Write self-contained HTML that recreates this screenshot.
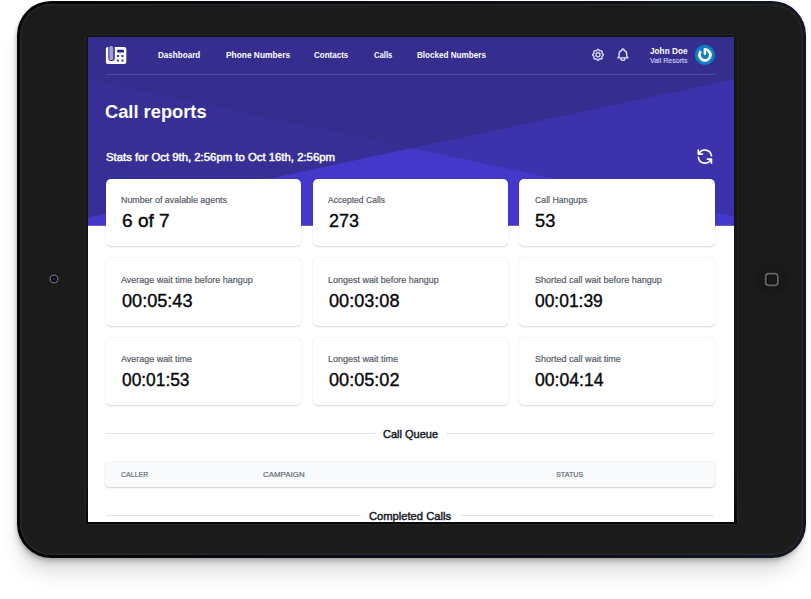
<!DOCTYPE html>
<html lang="en"><head><meta charset="utf-8"><title>Call reports</title>
<style>
html,body{margin:0;padding:0;background:#fff;}
body{width:811px;height:599px;overflow:hidden;position:relative;font-family:"Liberation Sans",sans-serif;}
.device{position:absolute;left:17.1px;top:1px;width:788.7px;height:556.8px;border-radius:34px;background:linear-gradient(90deg,#040406 0%,#0a0d16 60%,#131726 100%);box-shadow:-3px 20px 20px -6px rgba(0,0,0,.13),-3px 8px 10px -4px rgba(0,0,0,.12),-1px 3.5px 5px -2px rgba(0,0,0,.22),-2px 0 3px -1px rgba(0,0,0,.08);}
.device:before{content:"";position:absolute;left:3.1px;top:2.6px;right:2.9px;bottom:2.8px;border-radius:31px;background:#1b1b1b;box-shadow:0 0 0 1.6px #262626 inset;}
.scrbd{position:absolute;left:85.8px;top:34.8px;width:650.8px;height:489px;background:linear-gradient(180deg,#16160f 0%,#16160f 90%,#060606 100%);box-shadow:0 0 0 .8px #292929;border-radius:1.5px;}
.screen{position:absolute;left:88px;top:37px;width:646.4px;height:485.4px;background:#fff;overflow:hidden;}
.t{position:absolute;white-space:nowrap;line-height:1;transform:rotate(.001deg);transform-origin:0 0;}
.hdr{position:absolute;left:0;top:0;width:647px;height:188.6px;}
.card{position:absolute;background:#fff;border-radius:5px;width:195.3px;height:67.4px;box-shadow:0 .6px 2px rgba(0,0,0,.11),0 .6px 1.3px rgba(0,0,0,.06);}
.line{position:absolute;height:1px;background:#dfe2e6;}
.cam{position:absolute;left:49.1px;top:274.1px;width:10px;height:10px;border-radius:50%;background:radial-gradient(circle,#2246c4 0,#10267c .8px,#060608 1.9px,#060608 2.9px,#626262 3.4px,#5c5c5c 4.2px,rgba(60,60,60,0) 4.9px);}
</style></head><body>
<div class="device"></div>
<div class="cam"></div>
<svg style="position:absolute;left:750px;top:258px;width:44px;height:44px" viewBox="750 258 44 44">
<circle cx="771.75" cy="279.5" r="17" fill="#181818" stroke="#202020" stroke-width=".6"/>
<rect x="764.45" y="272.45" width="14.6" height="14.1" rx="4" fill="#111"/>
<rect x="765.75" y="273.75" width="12" height="11.5" rx="2.9" fill="none" stroke="#676767" stroke-width="1.9"/>
<rect x="767.1" y="275.1" width="9.3" height="8.8" rx="1.4" fill="#191919" stroke="#0f0f0f" stroke-width=".7"/>
</svg>
<div class="scrbd"></div>
<div class="screen">

<svg class="hdr" viewBox="0 0 647 188.6" preserveAspectRatio="none"><rect width="647" height="188.6" fill="#362e8e"/><polygon points="0.0,42.5 324.1,111.1 0.0,180.4" fill="#382f96"/><polygon points="324.1,111.1 647.0,42.1 647.0,179.5" fill="#3b32ac"/><polygon points="0.0,180.4 324.1,111.1 647.0,179.5 647.0,188.6 0.0,188.6" fill="#4338ca"/></svg>
<svg style="position:absolute;left:0;top:0;width:647px;height:486px" viewBox="88 37 647 486"><g transform="translate(105.9,47)"><rect x="0" y="0" width="20.4" height="16.9" rx="2" fill="#fff"/><rect x="2.35" y="-2" width="6.55" height="16.1" rx="3" fill="#362e8e"/><rect x="3.4" y="-0.9" width="3.9" height="13.9" rx="1.6" fill="#a19dd6"/><rect x="11.3" y="2.8" width="6.7" height="2.6" rx=".3" fill="#2a2384"/><rect x="11" y="7.9" width="2.2" height="2.2" rx=".4" fill="#3f3896"/><rect x="15.5" y="7.9" width="2.2" height="2.2" rx=".4" fill="#3f3896"/><rect x="11" y="12.4" width="2.2" height="2.2" rx=".4" fill="#3f3896"/><rect x="15.5" y="12.4" width="2.2" height="2.2" rx=".4" fill="#3f3896"/></g><g transform="translate(590.70,47.50) scale(0.6083)" fill="none" stroke="#dddcfc" stroke-width="2.2" stroke-linecap="round" stroke-linejoin="round"><path d="M10.325 4.317c.426-1.756 2.924-1.756 3.35 0a1.724 1.724 0 002.573 1.066c1.543-.94 3.31.826 2.37 2.37a1.724 1.724 0 001.065 2.572c1.756.426 1.756 2.924 0 3.35a1.724 1.724 0 00-1.066 2.573c.94 1.543-.826 3.31-2.37 2.37a1.724 1.724 0 00-2.572 1.065c-.426 1.756-2.924 1.756-3.35 0a1.724 1.724 0 00-2.573-1.066c-1.543.94-3.31-.826-2.37-2.37a1.724 1.724 0 00-1.065-2.572c-1.756-.426-1.756-2.924 0-3.35a1.724 1.724 0 001.066-2.573c-.94-1.543.826-3.31 2.37-2.37.996.608 2.296.07 2.572-1.065z"/><path d="M15.3 12a3.3 3.3 0 11-6.6 0 3.3 3.3 0 016.6 0z"/></g><g transform="translate(615.30,47.10) scale(0.6333)" fill="none" stroke="#dddcfc" stroke-width="2.2" stroke-linecap="round" stroke-linejoin="round"><path d="M15 17h5l-1.405-1.405A2.032 2.032 0 0118 14.158V11a6.002 6.002 0 00-4-5.659V5a2 2 0 10-4 0v.341C7.67 6.165 6 8.388 6 11v3.159c0 .538-.214 1.055-.595 1.436L4 17h5m6 0v1a3 3 0 11-6 0v-1m6 0H9"/></g><g transform="translate(695.05,146.75) scale(0.8208)" fill="none" stroke="#fff" stroke-width="2" stroke-linecap="round" stroke-linejoin="round"><path d="M4 4v5h.582m15.356 2A8.001 8.001 0 004.582 9m0 0H9m11 11v-5h-.581m0 0a8.003 8.003 0 01-15.357-2m15.357 2H15"/></g><g transform="translate(704.9,54.9)"><circle r="10.1" fill="#0e7ec0"/><path d="M0,-5.5 A5.5,5.5 0 1 1 -4.1,-3.67" fill="none" stroke="#fff" stroke-width="2.8"/><rect x="-1.25" y="-6.9" width="2.5" height="7.1" rx="1" fill="#fff"/></g></svg>
<span class="t" style="left:70.40px;top:13.71px;font-size:9.2px;font-weight:700;color:#fff;transform:rotate(.001deg) scaleX(0.8812);">Dashboard</span>
<span class="t" style="left:137.80px;top:13.71px;font-size:9.2px;font-weight:700;color:#fff;transform:rotate(.001deg) scaleX(0.9098);">Phone Numbers</span>
<span class="t" style="left:226.20px;top:13.71px;font-size:9.2px;font-weight:700;color:#fff;transform:rotate(.001deg) scaleX(0.8725);">Contacts</span>
<span class="t" style="left:285.50px;top:13.71px;font-size:9.2px;font-weight:700;color:#fff;transform:rotate(.001deg) scaleX(0.8375);">Calls</span>
<span class="t" style="left:329.30px;top:13.71px;font-size:9.2px;font-weight:700;color:#fff;transform:rotate(.001deg) scaleX(0.8819);">Blocked Numbers</span>
<div class="line" style="left:17.799999999999997px;top:37px;width:608.8000000000001px;background:#4f499f"></div>
<span class="t" style="left:561.50px;top:9.78px;font-size:9px;font-weight:700;color:#fff;transform:rotate(.001deg) scaleX(0.9143);">John Doe</span>
<span class="t" style="left:561.60px;top:19.84px;font-size:8.1px;font-weight:400;color:#d6d4fb;transform:rotate(.001deg) scaleX(0.8715);-webkit-text-stroke:.12px #d6d4fb;">Vail Resorts</span>
<span class="t" style="left:17.20px;top:65.76px;font-size:18.6px;font-weight:700;color:#fff;transform:rotate(.001deg) scaleX(0.9833);">Call reports</span>
<span class="t" style="left:17.90px;top:115.05px;font-size:11.4px;font-weight:400;color:#fff;transform:rotate(.001deg) scaleX(0.9964);-webkit-text-stroke:.45px #fff;">Stats for Oct 9th, 2:56pm to Oct 16th, 2:56pm</span>
<div class="card" style="left:17.7px;top:141.5px"></div>
<span class="t" style="left:33.10px;top:158.92px;font-size:8.6px;font-weight:400;color:#575d69;transform:rotate(.001deg) scaleX(1.0319);-webkit-text-stroke:.2px #575d69;">Number of avalable agents</span>
<span class="t" style="left:33.60px;top:175.12px;font-size:18.4px;font-weight:400;color:#06070b;transform:rotate(.001deg) scaleX(1.0366);-webkit-text-stroke:.38px #06070b;">6 of 7</span>
<div class="card" style="left:224.8px;top:141.5px"></div>
<span class="t" style="left:240.20px;top:158.92px;font-size:8.6px;font-weight:400;color:#575d69;transform:rotate(.001deg) scaleX(0.9943);-webkit-text-stroke:.2px #575d69;">Accepted Calls</span>
<span class="t" style="left:240.70px;top:175.12px;font-size:18.4px;font-weight:400;color:#06070b;transform:rotate(.001deg) scaleX(0.9743);-webkit-text-stroke:.38px #06070b;">273</span>
<div class="card" style="left:431.4px;top:141.5px"></div>
<span class="t" style="left:446.80px;top:158.92px;font-size:8.6px;font-weight:400;color:#575d69;transform:rotate(.001deg) scaleX(1.0156);-webkit-text-stroke:.2px #575d69;">Call Hangups</span>
<span class="t" style="left:447.30px;top:175.12px;font-size:18.4px;font-weight:400;color:#06070b;transform:rotate(.001deg) scaleX(0.9917);-webkit-text-stroke:.38px #06070b;">53</span>
<div class="card" style="left:17.7px;top:221.2px"></div>
<span class="t" style="left:33.10px;top:238.62px;font-size:8.6px;font-weight:400;color:#575d69;transform:rotate(.001deg) scaleX(1.0463);-webkit-text-stroke:.2px #575d69;">Average wait time before hangup</span>
<span class="t" style="left:33.60px;top:254.82px;font-size:18.4px;font-weight:400;color:#06070b;transform:rotate(.001deg) scaleX(0.9847);-webkit-text-stroke:.38px #06070b;">00:05:43</span>
<div class="card" style="left:224.8px;top:221.2px"></div>
<span class="t" style="left:240.20px;top:238.62px;font-size:8.6px;font-weight:400;color:#575d69;transform:rotate(.001deg) scaleX(1.0436);-webkit-text-stroke:.2px #575d69;">Longest wait before hangup</span>
<span class="t" style="left:240.70px;top:254.82px;font-size:18.4px;font-weight:400;color:#06070b;transform:rotate(.001deg) scaleX(0.9847);-webkit-text-stroke:.38px #06070b;">00:03:08</span>
<div class="card" style="left:431.4px;top:221.2px"></div>
<span class="t" style="left:446.80px;top:238.62px;font-size:8.6px;font-weight:400;color:#575d69;transform:rotate(.001deg) scaleX(1.0482);-webkit-text-stroke:.2px #575d69;">Shorted call wait before hangup</span>
<span class="t" style="left:447.30px;top:254.82px;font-size:18.4px;font-weight:400;color:#06070b;transform:rotate(.001deg) scaleX(0.9470);-webkit-text-stroke:.38px #06070b;">00:01:39</span>
<div class="card" style="left:17.7px;top:300.8px"></div>
<span class="t" style="left:33.10px;top:318.22px;font-size:8.6px;font-weight:400;color:#575d69;transform:rotate(.001deg) scaleX(1.0417);-webkit-text-stroke:.2px #575d69;">Average wait time</span>
<span class="t" style="left:33.60px;top:334.42px;font-size:18.4px;font-weight:400;color:#06070b;transform:rotate(.001deg) scaleX(0.9428);-webkit-text-stroke:.38px #06070b;">00:01:53</span>
<div class="card" style="left:224.8px;top:300.8px"></div>
<span class="t" style="left:240.20px;top:318.22px;font-size:8.6px;font-weight:400;color:#575d69;transform:rotate(.001deg) scaleX(1.0467);-webkit-text-stroke:.2px #575d69;">Longest wait time</span>
<span class="t" style="left:240.70px;top:334.42px;font-size:18.4px;font-weight:400;color:#06070b;transform:rotate(.001deg) scaleX(0.9847);-webkit-text-stroke:.38px #06070b;">00:05:02</span>
<div class="card" style="left:431.4px;top:300.8px"></div>
<span class="t" style="left:446.80px;top:318.22px;font-size:8.6px;font-weight:400;color:#575d69;transform:rotate(.001deg) scaleX(1.0491);-webkit-text-stroke:.2px #575d69;">Shorted call wait time</span>
<span class="t" style="left:447.30px;top:334.42px;font-size:18.4px;font-weight:400;color:#06070b;transform:rotate(.001deg) scaleX(0.9582);-webkit-text-stroke:.38px #06070b;">00:04:14</span>
<div class="line" style="left:18px;top:395.8px;width:268.8px"></div>
<div class="line" style="left:358.1px;top:395.8px;width:268.19999999999993px"></div>
<span class="t" style="left:294.90px;top:391.85px;font-size:11.4px;font-weight:400;color:#151a26;transform:rotate(.001deg) scaleX(0.9667);-webkit-text-stroke:.45px #151a26;">Call Queue</span>
<div style="position:absolute;left:17.400000000000006px;top:425.2px;width:609.8000000000001px;height:25px;background:#f9fafb;border-radius:4.5px;box-shadow:0 .7px 2px rgba(0,0,0,.12),0 .5px 1.2px rgba(0,0,0,.07)"></div>
<span class="t" style="left:33.00px;top:433.50px;font-size:7.8px;font-weight:400;color:#626a77;transform:rotate(.001deg) scaleX(0.9030);-webkit-text-stroke:.2px #626a77;">CALLER</span>
<span class="t" style="left:174.80px;top:433.50px;font-size:7.8px;font-weight:400;color:#626a77;transform:rotate(.001deg) scaleX(1.0142);-webkit-text-stroke:.2px #626a77;">CAMPAIGN</span>
<span class="t" style="left:467.80px;top:433.50px;font-size:7.8px;font-weight:400;color:#626a77;transform:rotate(.001deg) scaleX(0.9254);-webkit-text-stroke:.2px #626a77;">STATUS</span>
<div class="line" style="left:18px;top:478.4px;width:255.2px"></div>
<div class="line" style="left:371.7px;top:478.4px;width:254.59999999999997px"></div>
<span class="t" style="left:281.30px;top:474.05px;font-size:11.4px;font-weight:400;color:#151a26;transform:rotate(.001deg) scaleX(0.9811);-webkit-text-stroke:.45px #151a26;">Completed Calls</span>
</div></body></html>
